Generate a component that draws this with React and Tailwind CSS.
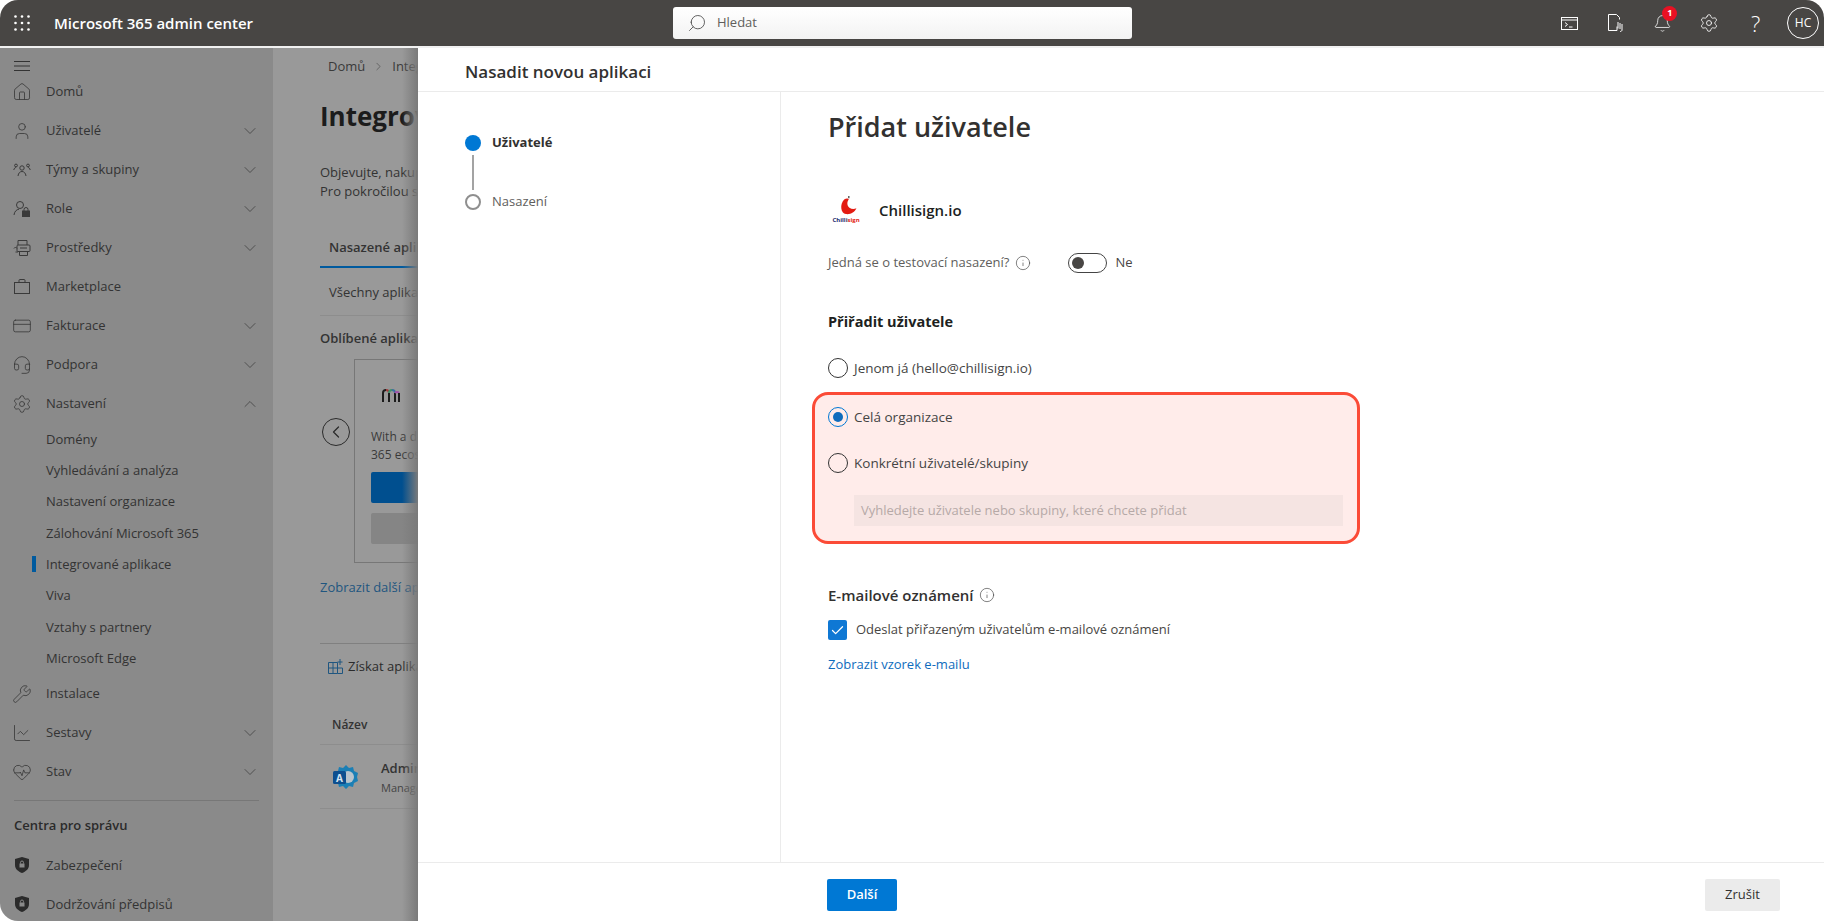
import { Bell, ChevronDown, ChevronLeft, ChevronRight, ChevronUp, Check, ChartLine, CreditCard, Headset, HeartPulse, Home, Info, Search, Settings, User, Wrench } from 'lucide-react';

const font = "font-['Open_Sans','Noto_Sans',sans-serif]";

// thin icons drawn by hand where lucide has no close match
function TeamIcon() {
  return (
    <svg width="18" height="18" viewBox="0 0 18 18" fill="none" stroke="#3a3a3a" strokeWidth="1">
      <circle cx="9" cy="7" r="2.2" />
      <path d="M5 15c.4-3 2-4.5 4-4.5s3.600 1.500 4 4.500" />
      <circle cx="3" cy="4.500" r="1.400" />
      <circle cx="15" cy="4.500" r="1.400" />
      <path d="M.8 9c.3-1.500 1.100-2.500 2.200-2.500M17.200 9c-.3-1.500-1.100-2.500-2.200-2.500" />
    </svg>
  );
}

function RoleIcon() {
  return (
    <svg width="18" height="18" viewBox="0 0 18 18" fill="none" stroke="#3a3a3a" strokeWidth="1">
      <circle cx="7" cy="5" r="3.500" />
      <path d="M1 15c.4-3.500 2.500-5.500 5-5.800" />
      <rect x="9.500" y="11" width="7" height="5.500" fill="#3a3a3a" />
      <path d="M11 11V9.500a2 2 0 0 1 4 0V11" />
    </svg>
  );
}

function ResourceIcon() {
  return (
    <svg width="18" height="18" viewBox="0 0 18 18" fill="none" stroke="#3a3a3a" strokeWidth="1">
      <path d="M5 6V1.500h9V6M5 13H2.500M1 9.500 2.500 8 4 9.500" />
      <rect x="4" y="6" width="13" height="6.500" rx="1" />
      <path d="M6.500 12v4.500h8V12M7 9h7" />
    </svg>
  );
}

function BagIcon() {
  return (
    <svg width="16" height="15" viewBox="0 0 16 15" fill="none" stroke="#3a3a3a" strokeWidth="1">
      <rect x=".5" y="3.500" width="15" height="11" />
      <path d="M5 3.500V1.500a1 1 0 0 1 1-1h4a1 1 0 0 1 1 1v2" />
    </svg>
  );
}

function ShieldIcon() {
  return (
    <svg width="14" height="16" viewBox="0 0 14 16">
      <path d="M7 0 14 2v6c0 4-3.200 6.500-7 8-3.800-1.500-7-4-7-8V2z" fill="#2b2b2b" />
      <rect x="4.500" y="6.500" width="5" height="4" fill="#8a8a8a" />
      <path d="M5.500 6.500V5.500a1.500 1.500 0 0 1 3 0v1" fill="none" stroke="#8a8a8a" />
    </svg>
  );
}

function NavRow({ icon, label, chevron }) {
  return (
    <div className="flex items-center h-[39px] shrink-0 pl-[12px] pr-[13px] text-[#333]">
      <span className="w-[20px] flex justify-center shrink-0">{icon}</span>
      <span className="ml-[14px] text-[13px] flex-1 whitespace-nowrap">{label}</span>
      {chevron === 'down' && <ChevronDown size={20} strokeWidth={1} color="#444" />}
      {chevron === 'up' && <ChevronUp size={20} strokeWidth={1} color="#444" />}
    </div>
  );
}

function SubRow({ label, active }) {
  return (
    <div className="relative flex items-center h-[31.3px] shrink-0 pl-[46px] text-[13px] text-[#333] whitespace-nowrap">
      {active && <span className="absolute left-[32px] top-[7px] w-[4px] h-[16px] bg-[#005a9e]" />}
      {label}
    </div>
  );
}

function Sidebar() {
  const ic = { size: 20, strokeWidth: 1, color: '#3a3a3a' };
  return (
    <aside className="w-[273px] shrink-0 bg-[#8a8a8a] flex flex-col overflow-hidden">
      <div className="h-[24px] pt-[13px] pl-[14px] shrink-0">
        <svg width="16" height="10" viewBox="0 0 16 10" stroke="#333" className="block">
          <path d="M0 .5h16M0 5h16M0 9.500h16" />
        </svg>
      </div>
      <NavRow icon={<Home {...ic} />} label="Domů" />
      <NavRow icon={<User {...ic} />} label="Uživatelé" chevron="down" />
      <NavRow icon={<TeamIcon />} label="Týmy a skupiny" chevron="down" />
      <NavRow icon={<RoleIcon />} label="Role" chevron="down" />
      <NavRow icon={<ResourceIcon />} label="Prostředky" chevron="down" />
      <NavRow icon={<BagIcon />} label="Marketplace" />
      <NavRow icon={<CreditCard {...ic} />} label="Fakturace" chevron="down" />
      <NavRow icon={<Headset {...ic} />} label="Podpora" chevron="down" />
      <NavRow icon={<Settings {...ic} />} label="Nastavení" chevron="up" />
      <div className="pt-[1px] shrink-0">
        <SubRow label="Domény" />
        <SubRow label="Vyhledávání a analýza" />
        <SubRow label="Nastavení organizace" />
        <SubRow label="Zálohování Microsoft 365" />
        <SubRow label="Integrované aplikace" active />
        <SubRow label="Viva" />
        <SubRow label="Vztahy s partnery" />
        <SubRow label="Microsoft Edge" />
      </div>
      <div className="shrink-0">
        <NavRow icon={<Wrench {...ic} />} label="Instalace" />
        <NavRow icon={<ChartLine {...ic} />} label="Sestavy" chevron="down" />
        <NavRow icon={<HeartPulse {...ic} />} label="Stav" chevron="down" />
      </div>
      <div className="mx-[14px] mt-[9px] border-t border-[#777] shrink-0" />
      <div className="pl-[14px] mt-[15px] text-[13px] font-semibold text-[#2b2b2b] shrink-0">Centra pro správu</div>
      <div className="mt-[10px] shrink-0">
        <NavRow icon={<ShieldIcon />} label="Zabezpečení" />
        <NavRow icon={<ShieldIcon />} label="Dodržování předpisů" />
      </div>
    </aside>
  );
}

function AdminAppIcon() {
  return (
    <svg width="28" height="26" viewBox="0 0 28 26">
      <path d="M14 1l3 3 4-1 1 4 4 2-1 4 1 4-4 2-1 4-4-1-3 3-3-3-4 1-1-4-4-2 1-4-1-4 4-2 1-4 4 1z" fill="#1b7fb5" />
      <circle cx="16" cy="13" r="6" fill="#b9c4cc" />
      <rect x="1" y="7" width="13" height="13" rx="1.500" fill="#0d4f8f" />
      <text x="7.500" y="17.500" textAnchor="middle" fontSize="10" fontWeight="700" fill="#d7e6f2">A</text>
    </svg>
  );
}

function BackgroundPage() {
  return (
    <div className="w-[145px] shrink-0 bg-[#999999] overflow-hidden relative">
      <div className="w-[420px] pl-[47px] text-[#333] whitespace-nowrap">
        <div className="pl-[8px] mt-[9px] flex items-center text-[13px] text-[#3a3a3a] leading-[18px]">
          Domů
          <ChevronRight size={13} strokeWidth={1} className="mx-[7px]" />
          Integrované aplikace
        </div>
        <div className="mt-[23px] text-[26px] leading-[36px] font-bold text-[#1c1c1c]">Integrované aplikace</div>
        <div className="mt-[29px] text-[13px] leading-[19px]">
          <div>Objevujte, nakupujte a spravujte aplikace</div>
          <div>Pro pokročilou správu přejděte do</div>
        </div>
        <div className="mt-[37px] pl-[9px] text-[13px] leading-[18px] font-semibold">Nasazené aplikace</div>
        <div className="mt-[10px] h-[2px] bg-[#005a9e]" />
        <div className="mt-[15px] pl-[9px] text-[13px] leading-[18px]">Všechny aplikace</div>
        <div className="mt-[14px] border-t border-[#8d8d8d]" />
        <div className="mt-[13px] text-[13px] leading-[18px] font-semibold">Oblíbené aplikace</div>
        <div className="mt-[12px] flex items-start">
          <div className="w-[28px] h-[28px] mt-[59px] shrink-0 rounded-full border-[1.5px] border-[#2b2b2b] flex items-center justify-center ml-[2px]">
            <ChevronLeft size={20} strokeWidth={1.5} color="#2b2b2b" />
          </div>
          <div className="ml-[4px] w-[300px] h-[204px] border border-[#777] pl-[16px] pt-[27px]">
            <svg width="20" height="16" viewBox="0 0 20 16" fill="none" strokeWidth="2" className="ml-[10px]">
              <path d="M2 15V6a3 3 0 0 1 3-3" stroke="#1c1c1c" />
              <path d="M5 3a3 3 0 0 1 3 3" stroke="#a03a3a" />
              <path d="M8 15V6" stroke="#1c1c1c" />
              <path d="M8 6a3 3 0 0 1 3-3" stroke="#3f8f6a" />
              <path d="M11 3a3 3 0 0 1 3 3" stroke="#3a6f9f" />
              <path d="M14 15V6" stroke="#1c1c1c" />
              <path d="M14 6a2.500 2.500 0 0 1 4 0" stroke="#a050a8" />
              <path d="M18 15V6" stroke="#1c1c1c" />
            </svg>
            <div className="mt-[25px] text-[12px] leading-[18px] text-[#3a3a3a]">
              <div>With a dedicated</div>
              <div>365 ecosystem</div>
            </div>
            <div className="mt-[8px] h-[31px] bg-[#004f8f] rounded-[2px]" />
            <div className="mt-[10px] h-[31px] bg-[#858585] rounded-[2px]" />
          </div>
        </div>
        <div className="mt-[15px] text-[13px] leading-[18px] text-[#1f5680]">Zobrazit další aplikace</div>
        <div className="mt-[47px] border-t border-[#808080]" />
        <div className="mt-[13px] pl-[8px] flex items-center text-[13px] leading-[18px] font-medium text-[#2b2b2b]">
          <svg width="15" height="15" viewBox="0 0 15 15" fill="none" stroke="#1f5680" className="mr-[5px]">
            <path d="M.5 3.500h9V14.500H.5zM5 3.500v11M.5 9h14v5.500H9.500M12 0v6M9.500 3h5" />
          </svg>
          Získat aplikace
        </div>
        <div className="mt-[42px] pl-[12px] text-[12px] leading-[16px] font-semibold">Název</div>
        <div className="mt-[11px] border-t border-[#8d8d8d]" />
        <div className="flex items-center h-[63px] pl-[12px]">
          <AdminAppIcon />
          <div className="ml-[21px]">
            <div className="text-[13px] leading-[18px] font-semibold">Admin</div>
            <div className="mt-[3px] text-[11px] leading-[15px] text-[#444]">Managed</div>
          </div>
        </div>
        <div className="border-t border-[#8d8d8d]" />
      </div>
      {/* shadow thrown by the panel */}
      <div className="absolute inset-y-0 right-0 w-[16px] bg-gradient-to-r from-transparent to-[#7a7a7a]" />
    </div>
  );
}

function Radio({ checked, label }) {
  return (
    <div className="flex items-center h-[20px]">
      <span className={`w-[20px] h-[20px] rounded-full border flex items-center justify-center shrink-0 ${checked ? 'border-[#0078d4]' : 'border-[#333]'}`}>
        {checked && <span className="w-[10px] h-[10px] rounded-full bg-[#0f6cbd]" />}
      </span>
      <span className="ml-[6px] text-[13.5px] font-medium text-[#444] whitespace-nowrap">{label}</span>
    </div>
  );
}

function ChillisignLogo() {
  return (
    <div className="w-[30px] h-[28px] flex flex-col items-center">
      <svg width="21" height="21" viewBox="0 0 18 18" className="shrink-0">
        <path d="M7 3c2-1.500 3.500-1 4 0-1.500 1.500-2 5 .5 7 2 1.500 4 1.500 6 .5-1.500 3.500-5 5.500-9 5C4 15 3 7 7 3z" fill="#e31b12" />
        <path d="M11 0v2" stroke="#333" />
      </svg>
      <div className="text-[6px] leading-[7px] font-bold whitespace-nowrap text-[#1c2a6b]">
        Chilli<span className="text-[#e31b12]">sign</span>
      </div>
    </div>
  );
}

function DeployPanel() {
  return (
    <section className="flex-1 min-w-0 bg-white flex flex-col z-10">
      <div className="h-[44px] shrink-0 border-b border-[#ebebeb] pl-[47px] pt-[13px] text-[17px] leading-[22px] font-semibold text-[#323130]">
        Nasadit novou aplikaci
      </div>
      <div className="flex-1 flex min-h-0">
        <div className="w-[363px] shrink-0 border-r border-[#ebebeb] pl-[47px] pt-[43px]">
          <div className="flex items-center h-[16px]">
            <span className="w-[16px] h-[16px] rounded-full bg-[#0078d4]" />
            <span className="ml-[11px] text-[13px] font-bold text-[#323130]">Uživatelé</span>
          </div>
          <div className="ml-[7px] mt-[4px] w-[2px] h-[35px] bg-[#a3a3a3]" />
          <div className="flex items-center h-[16px] mt-[4px]">
            <span className="w-[16px] h-[16px] rounded-full border-2 border-[#8f8f8f]" />
            <span className="ml-[11px] text-[13px] text-[#605e5c]">Nasazení</span>
          </div>
        </div>
        <div className="flex-1 pl-[47px] pt-[17px]">
          <h1 className="text-[27px] leading-[36px] font-semibold text-[#323130]">Přidat uživatele</h1>
          <div className="mt-[51px] flex items-center pl-[3px] h-[28px]">
            <ChillisignLogo />
            <span className="ml-[18px] text-[15px] font-semibold text-[#201f1e]">Chillisign.io</span>
          </div>
          <div className="mt-[29px] flex items-center h-[20px]">
            <span className="text-[13px] text-[#605e5c] whitespace-nowrap">Jedná se o testovací nasazení?</span>
            <Info size={16} strokeWidth={1} color="#444" className="ml-[6px]" />
            <span className="ml-[37px] w-[39px] h-[20px] rounded-full border border-[#444] flex items-center pl-[3px]">
              <span className="w-[12px] h-[12px] rounded-full bg-[#484644]" />
            </span>
            <span className="ml-[8px] text-[13px] text-[#484644]">Ne</span>
          </div>
          <div className="mt-[39px] text-[14.5px] leading-[20px] font-bold text-[#201f1e]">Přiřadit uživatele</div>
          <div className="mt-[26px]">
            <Radio label="Jenom já (hello@chillisign.io)" />
          </div>
          <div className="-ml-[16px] mt-[14px] w-[548px] h-[152px] rounded-[16px] border-[3px] border-[#fb4b37] bg-[#ffecea] pl-[13px] pr-[14px] pt-[12px]">
            <Radio checked label="Celá organizace" />
            <div className="mt-[26px]">
              <Radio label="Konkrétní uživatelé/skupiny" />
            </div>
            <div className="mt-[22px] ml-[26px] h-[31px] bg-[#f5e4e2] flex items-center pl-[7px] text-[13px] text-[#b6a9a7] whitespace-nowrap">
              Vyhledejte uživatele nebo skupiny, které chcete přidat
            </div>
          </div>
          <div className="mt-[41px] flex items-center h-[20px]">
            <span className="text-[15px] font-semibold text-[#323130]">E-mailové oznámení</span>
            <Info size={16} strokeWidth={1} color="#444" className="ml-[5px]" />
          </div>
          <div className="mt-[15px] flex items-center h-[20px]">
            <span className="w-[19px] h-[20px] rounded-[2px] bg-[#0f78d4] flex items-center justify-center">
              <Check size={15} strokeWidth={2} color="#fff" />
            </span>
            <span className="ml-[9px] text-[13px] text-[#484644] whitespace-nowrap">Odeslat přiřazeným uživatelům e-mailové oznámení</span>
          </div>
          <div className="mt-[14px] text-[13px] leading-[20px] text-[#0f6cbd]">Zobrazit vzorek e-mailu</div>
        </div>
      </div>
      <div className="h-[59px] shrink-0 border-t border-[#ebebeb] flex items-start justify-between pl-[409px] pr-[44px] pt-[16px]">
        <button className="w-[70px] h-[32px] bg-[#0078d4] rounded-[2px] text-white text-[13px] font-semibold">Další</button>
        <button className="w-[75px] h-[32px] bg-[#ebebeb] rounded-[2px] text-[#323130] text-[13px]">Zrušit</button>
      </div>
    </section>
  );
}

function TopBar() {
  const ic = { size: 19, strokeWidth: 1, color: '#fff' };
  return (
    <header className="h-[46px] shrink-0 bg-[#484644] flex items-center text-white">
      <div className="w-[52px] shrink-0 flex pl-[14px]">
        <svg width="16" height="16" viewBox="0 0 16 16" fill="#fff">
          {[1.500, 8, 14.500].flatMap((y) => [1.500, 8, 14.500].map((x) => <circle key={`${x}-${y}`} cx={x} cy={y} r="1.300" />))}
        </svg>
      </div>
      <div className="text-[15px] font-semibold whitespace-nowrap w-[621px] shrink-0 pl-[2px]">Microsoft 365 admin center</div>
      <div className="w-[459px] h-[32px] shrink-0 rounded-[3px] bg-gradient-to-b from-white to-[#f3f3f3] flex items-center pl-[14px] text-[13px] text-[#605e5c]">
        <Search size={20} strokeWidth={1} color="#444" className="-scale-x-100" />
        <span className="ml-[10px]">Hledat</span>
      </div>
      <div className="flex-1 flex items-center justify-end pr-[5px]">
        <span className="w-[46.5px] flex justify-center">
          <svg width="17" height="13" viewBox="0 0 17 13" fill="none" stroke="#fff">
            <rect x=".5" y=".5" width="16" height="12" />
            <path d="M.5 3h16M4 5.500 6.500 7.500 4 9.500M8 10h3.500" />
          </svg>
        </span>
        <span className="w-[46.5px] flex justify-center">
          <svg width="16" height="18" viewBox="0 0 16 18" fill="none" stroke="#fff">
            <path d="M9 12.500v4H.5v-16h8l3 3v2M10 8v6.500M12 9v6M14 10v6c0 1-1 1.500-2 1.500" />
          </svg>
        </span>
        <span className="w-[46.5px] flex justify-center">
          <span className="relative">
            <Bell {...ic} />
            <span className="absolute -top-[8px] left-[9px] w-[15px] h-[15px] rounded-full bg-[#e81123] text-[9px] font-bold flex items-center justify-center">1</span>
          </span>
        </span>
        <span className="w-[46.5px] flex justify-center">
          <Settings size={20} strokeWidth={1} color="#fff" />
        </span>
        <span className="w-[46.5px] mr-[8px] text-[22px] font-light leading-none text-center">?</span>
        <span className="w-[32px] h-[32px] rounded-full border border-white flex items-center justify-center text-[12px]">HC</span>
      </div>
    </header>
  );
}

export default function App() {
  return (
    <div className={`${font} w-[1824px] h-[923px] bg-white overflow-hidden`}>
      <div className="h-[921px] rounded-[18px] overflow-hidden flex flex-col">
        <TopBar />
        <div className="h-[2px] shrink-0 bg-[#f1f1f1]" />
        <div className="flex-1 flex min-h-0">
          <Sidebar />
          <BackgroundPage />
          <DeployPanel />
        </div>
      </div>
    </div>
  );
}
